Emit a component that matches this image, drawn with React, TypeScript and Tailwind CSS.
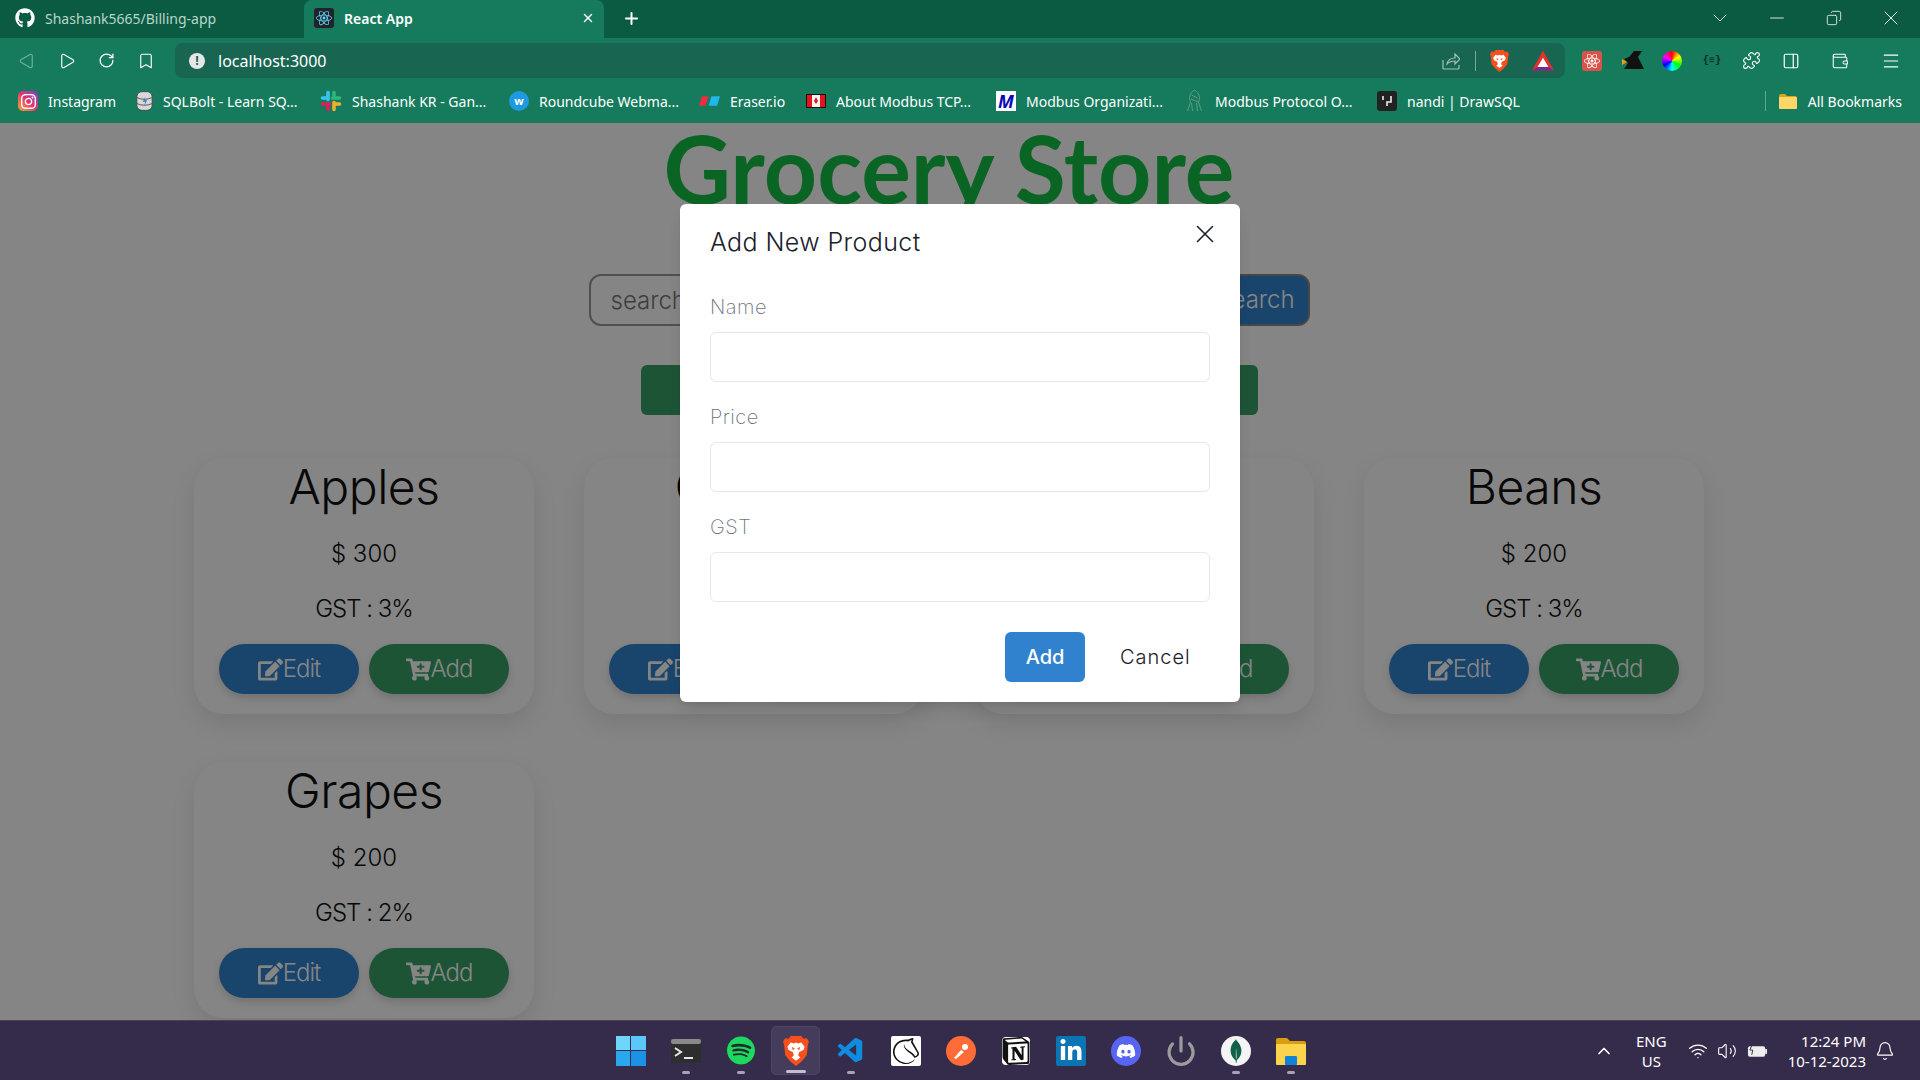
import React from 'react';
import { FaCartPlus, FaDiscord, FaEdit, FaGithub, FaLinkedinIn, FaSpotify } from 'react-icons/fa';
import { SiInstagram, SiLichess, SiMongodb, SiNotion, SiReact } from 'react-icons/si';
import { VscVscode } from 'react-icons/vsc';
import { Bell, ChevronDown, ChevronUp, Copy, Minus, Plus, Power, RotateCw, Bookmark, Puzzle, Menu, Volume2, Wifi, X, Wallet, PanelRight, Play } from 'lucide-react';

const products = [
    { name: 'Apples', price: 300, gst: 3 },
    { name: 'Carrots', price: 100, gst: 5 },
    { name: 'Onions', price: 150, gst: 5 },
    { name: 'Beans', price: 200, gst: 3 },
    { name: 'Grapes', price: 200, gst: 2 },
];

const Favicon: React.FC<{ className: string; text?: string }> = ({ className, text }) => (
    <span className={`flex h-[20px] w-[20px] shrink-0 items-center justify-center text-[11px] font-bold ${className}`}>{text}</span>
);

// brave's shield, the si package only has the one colour version
const BraveIcon: React.FC<{ className: string }> = ({ className }) => (
    <svg viewBox="0 0 24 28" className={className}>
        <path d="M7 0h10l2 2.5 3-.5 2 3-1 4-1 9-5 6-5 4-5-4-5-6-1-9-1-4 2-3 3 .5z" fill="#f7501d" />
        <path d="M7 6l3 1 2-1 2 1 3-1 3 4-1 3-4 2-1 3 2 2-4 3-4-3 2-2-1-3-4-2-1-3z" fill="#fff" />
        <path d="M8 10l3 2-2 1zM16 10l-3 2 2 1z" fill="#f7501d" />
    </svg>
);

const SlackIcon = () => (
    <svg viewBox="0 0 22 22" className="h-[22px] w-[22px] shrink-0" strokeWidth="3.6" strokeLinecap="round">
        <path d="M8 2.5v7M2.5 8h4" stroke="#36c5f0" />
        <path d="M19.5 8h-7M14 2.5v3" stroke="#2eb67d" />
        <path d="M14 19.5v-7M19.5 14h-4" stroke="#ecb22e" />
        <path d="M2.5 14h7M8 19.5v-3" stroke="#e01e5a" />
    </svg>
);

const bookmarks = [
    { label: 'Instagram', width: 'w-[68px]', icon: <span className="flex h-[20px] w-[20px] shrink-0 items-center justify-center rounded-[5px] bg-gradient-to-tr from-[#f9a602] via-[#e1306c] to-[#7b2fd0]"><SiInstagram className="text-[15px] text-white" /></span> },
    { label: 'SQLBolt - Learn SQ...', width: 'w-[137px]', icon: <svg viewBox="0 0 20 24" className="h-[22px] w-[17px] shrink-0"><rect x="1" y="1" width="18" height="22" rx="6" fill="#d8d8d8" stroke="#444" /><path d="M1 8q9 4 18 0M1 15q9 4 18 0" stroke="#444" fill="none" /><path d="M11 7l-3 6h3l-2 6 4-8h-3z" fill="#3b6fd0" /></svg> },
    { label: 'Shashank KR - Gan...', width: 'w-[137px]', icon: <SlackIcon /> },
    { label: 'Roundcube Webma...', width: 'w-[140px]', icon: <Favicon className="rounded-full bg-[#1f9ae0] text-white" text="w" /> },
    { label: 'Eraser.io', width: 'w-[56px]', icon: <svg viewBox="0 0 22 10" className="h-[10px] w-[21px] shrink-0"><path d="M3 0h7l-3 10H0z" fill="#ec2c40" /><path d="M13 0h9l-3 10h-9z" fill="#1fb6e8" /></svg> },
    { label: 'About Modbus TCP...', width: 'w-[140px]', icon: <svg viewBox="0 0 20 14" className="h-[14px] w-[20px] shrink-0"><rect width="20" height="14" fill="#111" /><rect x="1" y="1" width="18" height="12" fill="#f4f4f4" /><rect x="1" y="1" width="5" height="12" fill="#e5141c" /><rect x="14" y="1" width="5" height="12" fill="#e5141c" /><path d="M10 3l2 4-2 3-2-3z" fill="#e5141c" /></svg> },
    { label: 'Modbus Organizati...', width: 'w-[138px]', icon: <Favicon className="bg-white text-[18px] italic text-[#0a0ab8]" text="M" /> },
    { label: 'Modbus Protocol O...', width: 'w-[142px]', icon: <svg viewBox="0 0 20 24" className="h-[24px] w-[21px] shrink-0" fill="none" stroke="#5d9b86"><path d="M10 1c5 3 6 8 4 12l3 9M10 1C5 4 4 9 6 13l-3 9M7 6l6 3M6 10l8 3M7 14l1 8M12 14l1 8" /></svg> },
    { label: 'nandi | DrawSQL', width: 'w-[110px]', icon: <span className="flex h-[20px] w-[20px] shrink-0 items-center justify-center rounded-[3px] bg-[#222]"><svg viewBox="0 0 12 12" className="h-[12px] w-[12px]"><path d="M2 1v4M10 1v6H6v4" stroke="#eee" fill="none" strokeWidth="1.6" /></svg></span> },
];

const taskbarApps = [
    { key: 'windows', dot: false, icon: <span className="grid h-[30px] w-[30px] grid-cols-2 gap-[1px]"><span className="bg-[#6fd6fb]" /><span className="bg-[#5cc8f8]" /><span className="bg-[#2aa8ee]" /><span className="bg-[#1b92e6]" /></span> },
    { key: 'terminal', dot: true, icon: <svg viewBox="0 0 30 24" className="h-[24px] w-[30px]"><rect width="30" height="24" rx="2" fill="#2e2e2e" /><rect width="30" height="5" rx="2" fill="#8a8a8a" /><path d="M4 9l6 4-6 4" stroke="#e8e8e8" strokeWidth="2" fill="none" /><path d="M13 19h9" stroke="#e8e8e8" strokeWidth="2" /></svg> },
    { key: 'spotify', dot: true, icon: <span className="flex h-[28px] w-[28px] items-center justify-center rounded-full bg-[#1f2d2a]"><FaSpotify className="h-[29px] w-[29px] text-[#1ed760]" /></span> },
    { key: 'brave', dot: true, active: true, icon: <BraveIcon className="h-[30px] w-[26px]" /> },
    { key: 'vscode', dot: true, icon: <VscVscode className="h-[30px] w-[30px] text-[#0e8de0]" /> },
    { key: 'lichess', dot: false, icon: <span className="flex h-[30px] w-[30px] items-center justify-center rounded-[2px] bg-white"><SiLichess className="h-[26px] w-[26px] text-[#111]" /></span> },
    { key: 'postman', dot: false, icon: <span className="flex h-[30px] w-[30px] items-center justify-center rounded-full bg-[#ff6c37]"><svg viewBox="0 0 20 20" className="h-[20px] w-[20px]"><path d="M3 17l7-8 3 2-8 7z" fill="#fff" /><circle cx="14" cy="6" r="3" fill="#fff" /></svg></span> },
    { key: 'notion', dot: false, icon: <SiNotion className="h-[28px] w-[28px] rounded-[4px] bg-white text-[#111]" /> },
    { key: 'linkedin', dot: false, icon: <span className="flex h-[30px] w-[30px] items-center justify-center rounded-[2px] bg-[#0a74b4]"><FaLinkedinIn className="h-[24px] w-[24px] text-white" /></span> },
    { key: 'discord', dot: false, icon: <span className="flex h-[30px] w-[30px] items-center justify-center rounded-full bg-[#5865f2]"><FaDiscord className="h-[20px] w-[20px] text-white" /></span> },
    { key: 'power', dot: false, icon: <Power className="h-[32px] w-[32px] text-[#9b9b9b]" strokeWidth={2.4} /> },
    { key: 'mongo', dot: true, icon: <span className="flex h-[30px] w-[30px] items-center justify-center rounded-full bg-[#f4f4f4]"><SiMongodb className="h-[24px] w-[24px] text-[#116149]" /></span> },
    { key: 'explorer', dot: true, icon: <svg viewBox="0 0 30 28" className="h-[28px] w-[30px]"><path d="M0 3q0-2 2-2h9l3 3h14q2 0 2 2v3H0z" fill="#d99e0f" /><rect y="7" width="30" height="21" rx="1" fill="#fcd34d" /><rect x="9" y="19" width="12" height="9" rx="1" fill="#1281d8" /></svg> },
];

function ProductCard({ name, price, gst }: { name: string; price: number; gst: number }) {
    return (
        <div className="flex h-[256px] flex-col items-center rounded-[30px] bg-white px-[25px] shadow-[0_10px_25px_rgba(0,0,0,0.1)]">
            <h2 className="h-[60px] text-[48px] font-light leading-[58px] tracking-[-0.5px] text-[#111]">{name}</h2>
            <p className="mt-[18px] h-[36px] text-[24px] font-light leading-[36px] text-[#111]">$ {price}</p>
            <p className="mt-[19px] h-[36px] text-[24px] font-light leading-[36px] tracking-[-1px] text-[#111]">GST : {gst}%</p>
            <div className="mt-[17px] flex w-full gap-[10px]">
                <button className="flex h-[50px] flex-1 items-center justify-center rounded-full bg-[#3182ce] text-[24px] font-light tracking-[-1px] text-white shadow-[0_4px_8px_rgba(0,0,0,0.15)]">
                    <FaEdit className="text-[25px]" />Edit
                </button>
                <button className="flex h-[50px] flex-1 items-center justify-center rounded-full bg-[#38a169] text-[24px] font-light tracking-[-1px] text-white shadow-[0_4px_8px_rgba(0,0,0,0.15)]">
                    <FaCartPlus className="text-[25px]" />Add
                </button>
            </div>
        </div>
    );
}

function ModalField({ label }: { label: string }) {
    return (
        <div className="mb-[20px]">
            <label className="mb-[10px] block text-[20px] font-extralight leading-[30px] tracking-[0.5px] text-[#6b7280]">{label}</label>
            <input type="text" className="block h-[50px] w-full rounded-[6px] border-[1.5px] border-[#e2e8f0] bg-white" />
        </div>
    );
}

export default function App() {
    return (
        <div className="flex h-screen w-full flex-col overflow-hidden font-['Inter',sans-serif]">
            {/* tab strip */}
            <div className="flex h-[38px] shrink-0 items-center bg-[#0a5b42] pb-[2px] font-['Noto_Sans',sans-serif] text-[14px]">
                <div className="flex h-full w-[304px] items-center gap-[10px] pl-[15px] text-[#b8d6cb]">
                    <FaGithub className="h-[20px] w-[20px] text-white" />
                    <span>Shashank5665/Billing-app</span>
                </div>
                <div className="-mb-[2px] flex h-[38px] w-[300px] items-center rounded-t-[8px] bg-[#157b5c] pb-[2px] pl-[10px] pr-[9px] font-semibold text-white">
                    <span className="flex h-[20px] w-[20px] items-center justify-center rounded-[3px] bg-[#20232a]"><SiReact className="h-[16px] w-[16px] text-[#61dafb]" /></span>
                    <span className="ml-[10px] flex-1">React App</span>
                    <X className="h-[14px] w-[14px]" strokeWidth={2.5} />
                </div>
                <Plus className="ml-[18px] h-[19px] w-[19px] text-white" strokeWidth={2.5} />
                <div className="ml-auto flex items-center pr-[1px] text-white">
                    <span className="flex w-[57px] justify-center"><ChevronDown className="h-[24px] w-[24px]" strokeWidth={0.8} /></span>
                    <span className="flex w-[57px] justify-center"><Minus className="h-[22px] w-[22px]" strokeWidth={0.9} /></span>
                    <span className="flex w-[57px] justify-center"><Copy className="h-[16px] w-[16px] -scale-x-100" strokeWidth={1.2} /></span>
                    <span className="flex w-[57px] justify-center"><X className="h-[24px] w-[24px]" strokeWidth={0.9} /></span>
                </div>
            </div>

            {/* address bar */}
            <div className="flex h-[46px] shrink-0 items-center bg-[#157b5c] pb-[1px] text-white">
                <div className="flex w-[175px] items-center gap-[22px] pl-[18px]">
                    <Play className="h-[18px] w-[18px] rotate-180 text-[#6db39f]" strokeWidth={1.5} />
                    <Play className="h-[18px] w-[18px]" strokeWidth={1.5} />
                    <RotateCw className="h-[17px] w-[17px]" strokeWidth={1.8} />
                    <Bookmark className="h-[18px] w-[18px]" strokeWidth={1.5} />
                </div>
                <div className="flex h-[35px] w-[1390px] items-center rounded-[8px] bg-[#186551] pl-[14px] pr-[11px]">
                    <span className="flex h-[16px] w-[16px] items-center justify-center rounded-full bg-[#e6e6e6] text-[12px] font-bold text-[#1a5f4c]">!</span>
                    <span className="ml-[13px] flex-1 font-['Noto_Sans',sans-serif] text-[16px]">localhost:3000</span>
                    <svg viewBox="0 0 18 18" className="h-[18px] w-[18px]" fill="none" stroke="#9fc4b8" strokeWidth="1.2"><path d="M1 8v8q0 1 1 1h14q1 0 1-1v-3" /><path d="M5 12q1-6 8-6V2l5 5-5 5V9q-5 0-8 3z" /></svg>
                    <span className="ml-[15px] h-[20px] w-[1px] bg-[#7aa99a]" />
                    <BraveIcon className="ml-[14px] h-[22px] w-[19px]" />
                    <svg viewBox="0 0 24 22" className="ml-[23px] h-[21px] w-[22px]"><path d="M12 0l12 22H0z" fill="#e2322c" /><path d="M12 8l6 10H6z" fill="#fff" /><path d="M0 22l6-4h12l6 4z" fill="#7b2a8c" /></svg>
                </div>
                <div className="flex flex-1 items-center">
                    <span className="ml-[17px] flex h-[20px] w-[20px] items-center justify-center rounded-[3px] bg-[#d9534a]"><SiReact className="h-[16px] w-[16px] text-white" /></span>
                    <svg viewBox="0 0 22 20" className="ml-[20px] h-[20px] w-[22px]"><path d="M2 8l5-2 5-6h8l-4 6 6 12H2l4-6z" fill="#111" /><path d="M0 8l5 3-5 3z" fill="#f39c12" /></svg>
                    <span className="ml-[18px] h-[20px] w-[20px] rounded-full bg-[conic-gradient(#f00,#ff0,#0f0,#0ff,#00f,#f0f,#f00)]" />
                    <span className="ml-[20px] w-[20px] text-center font-['Liberation_Mono',monospace] text-[10px] font-bold text-[#0c2a20]">{'{≡}'}</span>
                    <Puzzle className="ml-[20px] h-[19px] w-[19px]" strokeWidth={1.4} />
                    <PanelRight className="ml-[21px] h-[18px] w-[18px]" strokeWidth={1.6} />
                    <Wallet className="ml-[31px] h-[18px] w-[18px]" strokeWidth={1.4} />
                    <Menu className="ml-[32px] h-[20px] w-[20px]" strokeWidth={1.4} />
                </div>
            </div>

            {/* bookmarks */}
            <div className="flex h-[39px] shrink-0 items-center bg-[#157b5c] pb-[5px] pl-[18px] font-['Noto_Sans',sans-serif] text-[14px] text-white">
                <div className="flex items-center gap-[20px]">
                    {bookmarks.map(b => (
                        <div key={b.label} className="flex items-center gap-[10px]">
                            {b.icon}
                            <span className={`${b.width} whitespace-nowrap`}>{b.label}</span>
                        </div>
                    ))}
                </div>
                <div className="ml-auto flex items-center pr-[18px]">
                    <span className="mr-[13px] h-[20px] w-[1px] bg-[#5fa592]" />
                    <svg viewBox="0 0 18 15" className="h-[15px] w-[18px]"><path d="M0 2q0-2 2-2h4l2 2h8q2 0 2 2v1H0z" fill="#d9a520" /><rect y="3" width="18" height="12" rx="1" fill="#fcd667" /></svg>
                    <span className="ml-[11px]">All Bookmarks</span>
                </div>
            </div>

            {/* page + modal */}
            <main className="relative min-h-0 flex-1 overflow-hidden bg-white">
                <div className="flex w-[1898px] flex-col items-center">
                    <h1 className="h-[132px] font-['Lato',sans-serif] text-[93px] font-bold leading-[90px] text-[#15c248]">Grocery Store</h1>
                    <div className="mt-[19px] flex h-[52px] w-[721px] gap-[10px]">
                        <input placeholder="search" className="h-full flex-1 rounded-[12px] border-2 border-[#999] bg-transparent px-[20px] text-[24px] font-light placeholder:text-[#777]" />
                        <button className="h-full w-[108px] rounded-[12px] border-2 border-[#888] bg-[#3182ce] text-[24px] font-light text-white">Search</button>
                    </div>
                    <div className="mt-[39px] flex h-[50px] w-[617px] gap-[16px]">
                        <button aria-label="Add product" className="h-full flex-1 rounded-[6px] bg-[#38a169]" />
                        <button aria-label="Checkout" className="h-full flex-1 rounded-[6px] bg-[#38a169]" />
                    </div>
                    <div className="mt-[43px] grid w-[1510px] grid-cols-[repeat(4,340px)] gap-x-[50px] gap-y-[48px]">
                        {products.map(p => (
                            <ProductCard key={p.name} {...p} />
                        ))}
                    </div>
                </div>

                <div className="absolute inset-0 flex items-start justify-center bg-black/48 pt-[81px]">
                    <section className="relative h-[498px] w-[560px] rounded-[6px] bg-white px-[30px] shadow-lg">
                        <h3 className="mb-[32px] pt-[20px] text-[25px] font-light leading-[36px] tracking-[0.4px] text-[#1a202c]">Add New Product</h3>
                        <X className="absolute right-[20px] top-[15px] h-[30px] w-[30px] text-[#1a202c]" strokeWidth={1.3} />
                        <ModalField label="Name" />
                        <ModalField label="Price" />
                        <ModalField label="GST" />
                        <div className="mt-[30px] flex items-center justify-end">
                            <button className="h-[50px] w-[80px] rounded-[6px] bg-[#3182ce] text-[20px] font-medium text-white">Add</button>
                            <button className="h-[50px] w-[125px] pl-[35px] text-left text-[20px] font-light tracking-[1px] text-[#1a202c]">Cancel</button>
                        </div>
                    </section>
                </div>
            </main>

            {/* windows taskbar */}
            <footer className="grid h-[60px] shrink-0 grid-cols-[1fr_auto_1fr] items-center border-t border-[#4a4258] bg-[#352b4a] text-white">
                <div />
                <div className="flex items-center gap-[6px] pl-[1px]">
                    {taskbarApps.map(a => (
                        <div key={a.key} className={`relative flex h-[49px] w-[49px] items-center justify-center rounded-[5px] ${a.active ? 'border border-[#4f4662] bg-[#453b5b]' : ''}`}>
                            {a.icon}
                            {a.dot && <span className={`absolute bottom-[1px] left-1/2 h-[3px] -translate-x-1/2 rounded-full ${a.active ? 'w-[20px] bg-[#c4bbd8]' : 'w-[8px] bg-[#a8a2b4]'}`} />}
                        </div>
                    ))}
                </div>
                <div className="flex items-center justify-end pr-[25px] font-['Noto_Sans',sans-serif] text-[15px]">
                    <ChevronUp className="h-[20px] w-[20px]" strokeWidth={2} />
                    <div className="ml-[22px] text-center leading-[20px]">ENG<br />US</div>
                    <Wifi className="ml-[21px] h-[20px] w-[20px]" strokeWidth={1.6} />
                    <Volume2 className="ml-[9px] h-[20px] w-[20px]" strokeWidth={1.3} />
                    <svg viewBox="0 0 22 16" className="ml-[10px] h-[16px] w-[21px]"><rect x="1" y="3" width="18" height="11" rx="2" fill="#eee" /><rect x="19" y="6" width="2" height="5" fill="#eee" /><path d="M6 0L3 7h3l-1 5" stroke="#352b4a" fill="none" /></svg>
                    <div className="ml-[20px] text-right leading-[20px]">12:24 PM<br />10-12-2023</div>
                    <Bell className="ml-[9px] h-[20px] w-[20px]" strokeWidth={1.4} />
                </div>
            </footer>
        </div>
    );
}
